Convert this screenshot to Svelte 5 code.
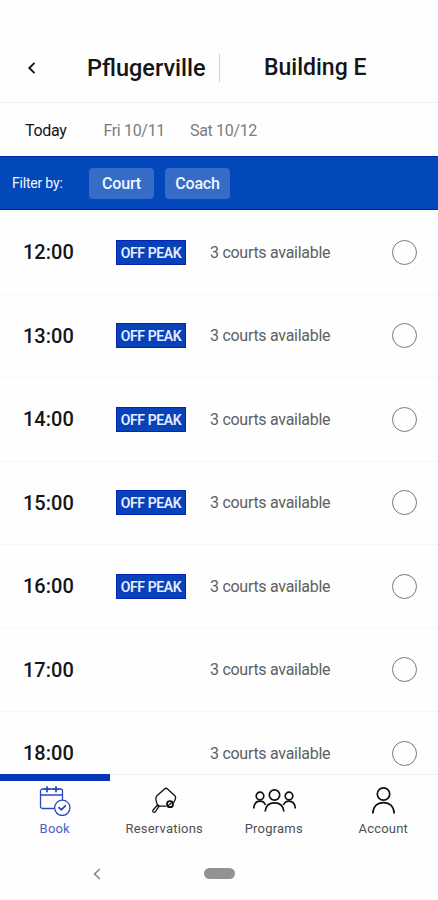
<script>
  const days = ['Today', 'Fri 10/11', 'Sat 10/12'];
  const filters = ['Court', 'Coach'];

  const slots = [
    { time: '12:00', offPeak: true, courts: 3 },
    { time: '13:00', offPeak: true, courts: 3 },
    { time: '14:00', offPeak: true, courts: 3 },
    { time: '15:00', offPeak: true, courts: 3 },
    { time: '16:00', offPeak: true, courts: 3 },
    { time: '17:00', offPeak: false, courts: 3 },
    { time: '18:00', offPeak: false, courts: 3 }
  ];

  const tabs = ['Book', 'Reservations', 'Programs', 'Account'];

  let day = $state('Today');
  let tab = $state('Book');
  let selected = $state(null);
</script>

<div class="screen">
  <header>
    <button class="back" type="button" aria-label="Back">
      <svg width="10" height="14" viewBox="0 0 10 14"><path d="M7.5 1.8 2.3 7l5.2 5.2" /></svg>
    </button>
    <h1 class="club">Pflugerville</h1>
    <span class="divider"></span>
    <h1>Building E</h1>
  </header>

  <nav class="days">
    {#each days as d}
      <button type="button" class:active={day === d} onclick={() => (day = d)}>{d}</button>
    {/each}
  </nav>

  <div class="filters">
    <span class="label">Filter by:</span>
    {#each filters as f}
      <button type="button" class="chip">{f}</button>
    {/each}
  </div>

  <main>
    {#each slots as s (s.time)}
      <div class="slot">
        <span class="time">{s.time}</span>
        <span class="tag-cell">
          {#if s.offPeak}<span class="tag">OFF PEAK</span>{/if}
        </span>
        <span class="courts">{s.courts} courts available</span>
        <button
          type="button"
          class="radio"
          class:on={selected === s.time}
          aria-label={'Select ' + s.time}
          onclick={() => (selected = s.time)}
        ></button>
      </div>
    {/each}
  </main>

  <footer>
    <nav class="tabs">
      {#each tabs as t}
        <button type="button" class="tab" class:active={tab === t} onclick={() => (tab = t)}>
          {#if t === 'Book'}
            <svg width="32" height="30" viewBox="0 0 32 30">
              <path d="M15 22.5H3.5a2 2 0 0 1-2-2V5a2 2 0 0 1 2-2h18a2 2 0 0 1 2 2v8.5M1.5 9h22" />
              <path class="bold" d="M8 1v4.5M17 1v4.5M5.5 3.2h5M14.5 3.2h5" />
              <circle cx="23.3" cy="21.8" r="7.7" />
              <path class="bold" d="m20 21.7 2.3 2.2 4-4" />
            </svg>
          {:else if t === 'Reservations'}
            <svg width="32" height="30" viewBox="0 0 32 30">
              <path d="M9.3 18.5C7.8 14.5 7.6 11.5 8.4 10.3L16.5 3c.9-.9 2-.9 3 0l7.4 6.8c1 1 1 2.2.4 3.5l-1.5 3.2" />
              <path d="M10 20.2h7.5" />
              <path d="m9.7 18.7 1.5 1.5-3.8 5.4c-.7.9-1.6.9-2.2.3-.7-.6-.6-1.5.1-2.2z" />
              <circle class="bold" cx="22" cy="18.2" r="3" />
              <path d="m20.6 19.3 2.8-2.3" />
            </svg>
          {:else if t === 'Programs'}
            <svg class="people" width="44" height="30" viewBox="0 0 44 30">
              <circle cx="22.5" cy="9" r="5.2" />
              <path d="M13.1 25.5c.6-5.7 4.2-8.6 9.4-8.6s8.8 2.900 9.4 8.600" />
              <circle cx="8" cy="10" r="3.8" />
              <circle cx="37" cy="10" r="3.8" />
              <path d="M1.7 22.500c.3-4.500 2.700-7.300 6.300-7.300 2.600 0 4.500 1.400 5.500 3.800M43.300 22.500c-.3-4.500-2.700-7.300-6.300-7.300-2.600 0-4.500 1.400-5.500 3.800" />
            </svg>
          {:else}
            <svg class="people" width="32" height="30" viewBox="0 0 32 30">
              <circle cx="16.5" cy="8" r="6.2" />
              <path d="M5.8 27.500c.3-7 4.500-10.900 10.700-10.900s10.400 3.900 10.700 10.900" />
            </svg>
          {/if}
          <span>{t}</span>
        </button>
      {/each}
    </nav>

    <div class="system">
      <svg width="10" height="14" viewBox="0 0 10 14"><path d="M7.8 2 2.5 7l5.3 5" /></svg>
      <span class="pill"></span>
    </div>
  </footer>
</div>

<style>
  :global(body) { margin: 0; background: #fff; }

  .screen {
    display: flex;
    flex-direction: column;
    height: 900px;
    overflow: hidden;
    font-family: Roboto, sans-serif;
    color: #151515;
    background: #fefefe;
  }
  button {
    padding: 0;
    border: none;
    background: none;
    font: inherit;
    letter-spacing: inherit;
    color: inherit;
    cursor: pointer;
  }
  svg {
    display: block;
    fill: none;
    stroke: currentColor;
    stroke-linecap: round;
    stroke-linejoin: round;
  }

  /* Header */
  header {
    display: flex;
    align-items: center;
    box-sizing: border-box;
    height: 103px;
    padding: 33px 0 0 27px;
    border-bottom: 1px solid #f1f1f1;
  }
  .back { width: 60px; }
  .back svg { stroke-width: 1.9; stroke-linecap: butt; stroke-linejoin: miter; }
  h1 {
    margin: 0;
    font-size: 23px;
    font-weight: 500;
    line-height: 30px;
    white-space: nowrap;
  }
  .club { width: 132px; font-size: 23.5px; }
  .divider { width: 1px; height: 28px; margin-right: 44px; background: #d0d0d0; }

  /* Days */
  .days {
    display: flex;
    align-items: center;
    gap: 25px;
    height: 52px;
    padding: 1px 0 0 25px;
    font-size: 16px;
    letter-spacing: -0.33px;
    color: #7c7c7c;
  }
  .days .active { margin-right: 12px; color: #151515; }

  /* Filters */
  .filters {
    display: flex;
    align-items: center;
    box-sizing: border-box;
    height: 54px;
    padding-left: 12px;
    border: solid #0229ab;
    border-width: 1px 0;
    background: #0248ba;
    color: #f2f6ff;
  }
  .label { width: 77px; font-size: 14px; letter-spacing: -0.2px; }
  .chip {
    width: 65px;
    height: 31px;
    margin-right: 11px;
    border-radius: 4px;
    background: #346cc8;
    font-size: 16px;
    font-weight: 500;
    letter-spacing: -0.2px;
  }

  /* Slots */
  main { flex: 1; min-height: 0; padding-top: 1px; overflow: hidden; }
  .slot {
    display: flex;
    align-items: center;
    box-sizing: border-box;
    height: 83.5px;
    padding: 0 21px 0 23px;
    border-bottom: 1px solid #f6f6f6;
  }
  .time { width: 93px; font-size: 20px; font-weight: 500; }
  .tag-cell { width: 94px; }
  .tag {
    display: block;
    box-sizing: border-box;
    width: 70px;
    height: 25px;
    border: 1px solid #0624b4;
    background: #0742b8;
    color: #e6edff;
    font-size: 14px;
    font-weight: 600;
    line-height: 24px;
    letter-spacing: -0.4px;
    text-align: center;
    white-space: nowrap;
  }
  .courts { flex: 1; font-size: 16px; letter-spacing: -0.28px; color: #606060; }
  .radio {
    box-sizing: border-box;
    width: 25px;
    height: 25px;
    border: 1px solid #777;
    border-radius: 50%;
  }
  .radio.on { background: #0742b8; box-shadow: inset 0 0 0 4px #fff; }

  /* Bottom bar */
  footer { height: 126px; background: #fefefe; }
  .tabs { display: grid; grid-template-columns: repeat(4, 1fr); height: 73px; }
  .tab {
    display: flex;
    flex-direction: column;
    align-items: center;
    border-top: 1px solid #f0f0f0;
    padding-top: 11px;
    font-size: 13px;
    color: #505050;
  }
  .tab svg { color: #111; stroke-width: 1.3; }
  .tab svg.people { stroke-width: 1.7; stroke-linecap: butt; }
  .tab span { margin-top: 5px; line-height: 16px; letter-spacing: 0.2px; }
  .tab.active { border-top: 7px solid #0437b4; padding-top: 5px; color: #4a62ca; }
  .tab.active svg { color: #2c49bf; }
  .tab svg .bold { stroke-width: 1.8; }

  .system { display: flex; align-items: center; height: 53px; padding-left: 92px; }
  .system svg { color: #808080; stroke-width: 1.5; stroke-linecap: butt; }
  .pill { width: 31px; height: 11px; margin-left: 102px; border-radius: 6px; background: #929292; }
</style>
